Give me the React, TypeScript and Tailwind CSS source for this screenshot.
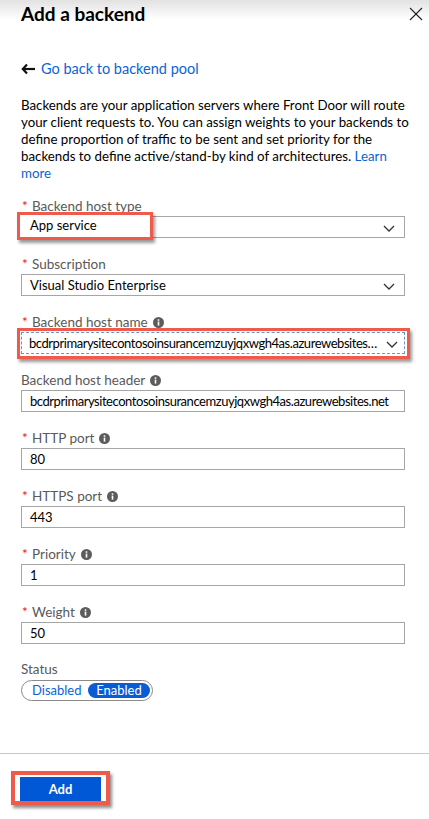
import type { ReactNode } from 'react';

const font = { fontFamily: 'Lato, "Noto Sans", sans-serif' };

function InfoIcon() {
    return (
        <svg width="11" height="11" viewBox="0 0 11 11" className="ml-[5px] inline-block">
            <circle cx="5.5" cy="5.5" r="5.5" fill="#5c5c5c" />
            <rect x="4.7" y="4.6" width="1.6" height="4" fill="#fff" />
            <rect x="4.7" y="2.3" width="1.6" height="1.5" fill="#fff" />
        </svg>
    );
}

function Chevron() {
    return (
        <svg width="12" height="7" viewBox="0 0 12 7" className="absolute right-[9px] top-[8px]">
            <polyline points="1,1 6,6 11,1" fill="none" stroke="#333" strokeWidth="1.3" />
        </svg>
    );
}

function Label({ text, required, info }: { text: string; required?: boolean; info?: boolean }) {
    return (
        <div className="flex items-center h-[16px] text-[13.5px] leading-[16px] text-[#595959]">
            {required && <span className="text-[#e3141e] w-[11px] pl-[1px]">*</span>}
            <span>{text}</span>
            {info && <InfoIcon />}
        </div>
    );
}

function Field({ label, required, info, children }: { label: string; required?: boolean; info?: boolean; children: ReactNode }) {
    return (
        <div className="mt-[18px] first:mt-0">
            <Label text={label} required={required} info={info} />
            <div className="mt-[2px]">{children}</div>
        </div>
    );
}

function Box({ value, select, tight }: { value: string; select?: boolean; tight?: boolean }) {
    return (
        <div className={`relative h-[22px] border border-[#a6a6a6] bg-white pl-[8px] text-[13px] leading-[20px] text-black whitespace-nowrap ${tight ? 'tracking-[-0.45px]' : ''}`}>
            {value}
            {select && <Chevron />}
        </div>
    );
}

export default function App() {
    return (
        <div className="relative w-[429px] h-[819px] bg-white overflow-hidden" style={font}>
            <div className="h-[28px] flex items-center justify-between pl-[21px] pr-[6px] bg-gradient-to-b from-[#e2e2e2] to-white to-70%">
                <div className="text-[19px] font-bold text-black leading-[24px]">Add a backend</div>
                <svg width="14" height="14" viewBox="0 0 14 14">
                    <line x1="1" y1="1" x2="13" y2="13" stroke="#222" strokeWidth="1.1" />
                    <line x1="13" y1="1" x2="1" y2="13" stroke="#222" strokeWidth="1.1" />
                </svg>
            </div>

            <div className="px-[21px]">
                <div className="mt-[31px] flex items-center h-[20px] text-[14.5px] leading-[20px]">
                    <svg width="15" height="12" viewBox="0 0 15 12" className="mr-[5px]">
                        <polyline points="6,1.5 1.8,6 6,10.5" fill="none" stroke="#111" strokeWidth="2.2" />
                        <line x1="2" y1="6" x2="14" y2="6" stroke="#111" strokeWidth="2.2" />
                    </svg>
                    <span className="text-[#0b63d6]">Go back to backend pool</span>
                </div>

                <p className="mt-[18px] text-[13.3px] leading-[17px] text-black -mr-[2px]">
                    Backends are your application servers where Front Door will route your client requests to. You can assign weights to your backends to define proportion of traffic to be sent and set priority for the backends to define active/stand-by kind of architectures. <span className="text-[#0b63d6]">Learn more</span>
                </p>

                <div className="mt-[16px] w-[384px]">
                    <Field label="Backend host type" required>
                        <div className="relative">
                            <Box value="" select />
                            <div className="absolute -left-[4px] -top-[4px] w-[136px] h-[28px] border-[3px] border-[#f05a4b] bg-white pl-[10px] text-[13px] leading-[21px] text-black shadow-[2px_3px_3px_rgba(0,0,0,0.4)]">
                                App service
                            </div>
                        </div>
                    </Field>
                    <Field label="Subscription" required>
                        <Box value="Visual Studio Enterprise" select />
                    </Field>
                    <Field label="Backend host name" required info>
                        <div className="relative">
                            <div className="absolute -left-[4px] -top-[4px] -right-[5px] -bottom-[5px] border-[3px] border-[#f05a4b] shadow-[2px_3px_3px_rgba(0,0,0,0.4)]" />
                            <div className="relative h-[22px] border border-dashed border-[#6f94c4] bg-white pl-[7px] pr-[26px] text-[13px] leading-[20px] tracking-[-0.45px] text-black whitespace-nowrap overflow-hidden text-ellipsis">
                                bcdrprimarysitecontosoinsurancemzuyjqxwgh4as.azurewebsites.net
                                <svg width="12" height="7" viewBox="0 0 12 7" className="absolute right-[6px] top-[8px]">
                                    <polyline points="1,1 6,6 11,1" fill="none" stroke="#333" strokeWidth="1.3" />
                                </svg>
                            </div>
                        </div>
                    </Field>
                    <Field label="Backend host header" info>
                        <Box value="bcdrprimarysitecontosoinsurancemzuyjqxwgh4as.azurewebsites.net" tight />
                    </Field>
                    <Field label="HTTP port" required info>
                        <Box value="80" />
                    </Field>
                    <Field label="HTTPS port" required info>
                        <Box value="443" />
                    </Field>
                    <Field label="Priority" required info>
                        <Box value="1" />
                    </Field>
                    <Field label="Weight" required info>
                        <Box value="50" />
                    </Field>

                    <div className="mt-[17px]">
                        <Label text="Status" />
                        <div className="mt-[3px] flex items-center w-[132px] h-[21px] rounded-full border border-[#8a8a8a] pl-[10px] pr-[2px] text-[13px]">
                            <span className="text-[#0b63d6] leading-[15px]">Disabled</span>
                            <span className="ml-auto h-[15px] w-[62px] rounded-full bg-[#0a5bd6] text-white leading-[15px] text-center">Enabled</span>
                        </div>
                    </div>
                </div>
            </div>

            <div className="mt-[52px] border-t border-[#c6c6c6] pl-[11px] pt-[17px]">
                <div className="w-[99px] h-[34px] border-[4px] border-[#f05a4b] bg-white pt-[2px] px-[5px] shadow-[2px_3px_3px_rgba(0,0,0,0.45)]">
                    <div className="h-[24px] bg-[#0058d7] text-white text-[13px] font-bold leading-[24px] text-center">Add</div>
                </div>
            </div>
        </div>
    );
}
